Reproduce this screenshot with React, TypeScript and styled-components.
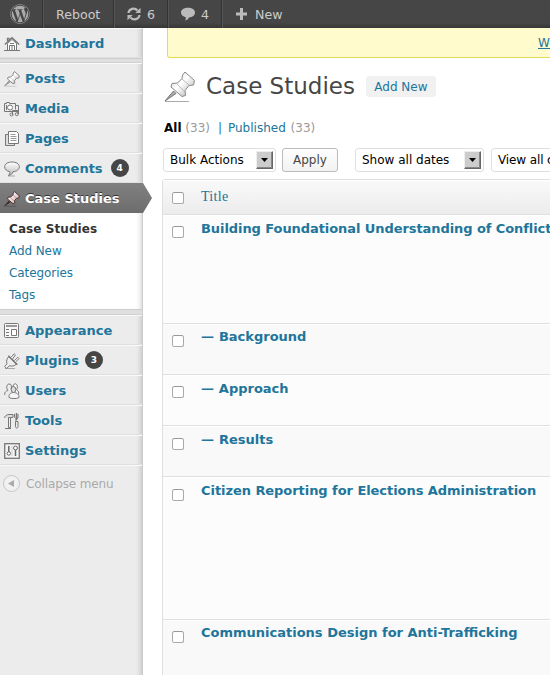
import React from "react";
import styled, { createGlobalStyle, css } from "styled-components";
import { FaWordpress } from "react-icons/fa";

const Global = createGlobalStyle`
  *, *::before, *::after { box-sizing: border-box; }
  html, body { margin: 0; overflow: hidden; background: #fff; }
  body { font: 12px/16px "DejaVu Sans", Verdana, sans-serif; color: #333; }
`;

const Page = styled.div`
  width: 550px;
  height: 675px;
  overflow: hidden;
  display: flex;
  flex-direction: column;
`;

const AdminBar = styled.header`
  flex: none;
  height: 28px;
  display: flex;
  background: linear-gradient(to top, #373737 0, #464646 5px);
  color: #ccc;
`;

const BarItem = styled.div<{ $w: number; $pad: number; $last?: boolean; $gap?: number }>`
  width: ${(p) => p.$w}px;
  padding-left: ${(p) => p.$pad}px;
  display: flex;
  align-items: center;
  gap: ${(p) => p.$gap ?? 0}px;
  white-space: nowrap;
  font-size: 12.6px;
  line-height: 29px;
  ${(p) =>
    !p.$last &&
    css`
      border-right: 1px solid #333;
      box-shadow: 1px 0 0 #555;
    `}
  svg { flex: none; display: block; }
`;

const Body = styled.div`
  flex: 1;
  min-height: 0;
  display: flex;
`;

const Sidebar = styled.nav`
  flex: none;
  width: 143px;
  height: 647px;
  background: #ececec;
  border-right: 1px solid #ccc;
  box-shadow: inset -6px 0 6px -6px rgba(0, 0, 0, 0.25);
`;

const MenuItem = styled.a<{ $current?: boolean }>`
  position: relative;
  display: flex;
  align-items: center;
  height: 30px;
  padding: 2px 0 0 4px;
  color: #21759b;
  font-size: 13px;
  font-weight: bold;
  white-space: nowrap;
  border-top: 1px solid #f9f9f9;
  border-bottom: 1px solid #dfdfdf;
  svg { flex: none; width: 16px; height: 16px; margin-right: 5px; }
  ${(p) =>
    p.$current &&
    css`
      width: 143px;
      color: #fff;
      text-shadow: 0 -1px 0 #333;
      background: linear-gradient(to bottom, #808080, #6d6d6d);
      border-color: #808080 transparent #6d6d6d;
      &::after {
        content: "";
        position: absolute;
        left: 143px;
        top: -1px;
        width: 9px;
        height: 30px;
        background: linear-gradient(to bottom, #808080, #6d6d6d);
        clip-path: polygon(0 0, 100% 50%, 0 100%);
      }
    `}
`;

const Separator = styled.div<{ $h?: number }>`
  height: ${(p) => p.$h ?? 5}px;
  background: #dfdfdf;
  border-top: 1px solid #ccc;
  border-bottom: 1px solid #d0d0d0;
`;

const Count = styled.span<{ $ml: number }>`
  display: flex;
  align-items: center;
  justify-content: center;
  width: 18px;
  height: 18px;
  margin: -2px 0 0 ${(p) => p.$ml}px;
  border-radius: 9px;
  background: #464646;
  color: #fff;
  font-size: 9px;
  line-height: 18px;
`;

const Submenu = styled.div`
  height: 96px;
  padding: 5px 0 0 9px;
  background: #fff;
  box-shadow: inset -6px 0 6px -6px rgba(0, 0, 0, 0.25);
`;

const SubItem = styled.a<{ $current?: boolean }>`
  display: block;
  height: 22px;
  line-height: 22px;
  color: ${(p) => (p.$current ? "#333" : "#21759b")};
  font-weight: ${(p) => (p.$current ? "bold" : "normal")};
  letter-spacing: ${(p) => (p.$current ? "0.08px" : "-0.08px")};
`;

const Collapse = styled.div`
  display: flex;
  align-items: center;
  height: 36px;
  padding-left: 3px;
  border-top: 1px solid #f9f9f9;
  color: #aaa;
  letter-spacing: -0.12px;
  svg { margin-right: 6px; }
`;

const Content = styled.main`
  flex: none;
  width: 407px;
  padding-left: 19px;
  overflow: hidden;
`;

const Notice = styled.div`
  width: 700px;
  height: 30px;
  margin-left: 5px;
  padding-left: 370px;
  line-height: 30px;
  background: #fffbcc;
  border: 1px solid #e6db55;
  border-top: 0;
  border-radius: 0 0 3px 3px;
  color: #21759b;
  text-decoration: underline;
`;

const Heading = styled.div`
  display: flex;
  align-items: center;
  height: 57px;
  padding-left: 2px;
`;

const Title = styled.h1`
  margin: 0 11px 0 10px;
  color: #464646;
  font-size: 23px;
  font-weight: normal;
  line-height: 29px;
  white-space: nowrap;
`;

const AddNew = styled.a`
  width: 70px;
  height: 21px;
  border-radius: 3px;
  background: #f1f1f1;
  color: #21759b;
  line-height: 22px;
  text-align: center;
`;

const Filters = styled.div`
  display: flex;
  height: 26px;
  align-items: center;
  padding-left: 2px;
  color: #999;
  white-space: pre;
  b { color: #000; }
  a { color: #21759b; margin-right: 1px; }
`;

const Divider = styled.span`
  margin: 0 6px 0 8px;
  width: 4px;
  color: #21759b;
`;

const Toolbar = styled.div`
  display: flex;
  width: 600px;
  height: 24px;
  margin: 7px 0 7px 1px;
`;

const Select = styled.div<{ $w: number; $mr: number; $track?: number }>`
  flex: none;
  display: flex;
  justify-content: space-between;
  width: ${(p) => p.$w}px;
  height: 24px;
  margin-right: ${(p) => p.$mr}px;
  padding: 2px 2px 2px 6px;
  border: 1px solid #dfdfdf;
  border-radius: 3px;
  color: #000;
  line-height: 18px;
  letter-spacing: ${(p) => p.$track ?? 0}px;
  white-space: nowrap;
`;

const Arrow = styled.span`
  display: flex;
  align-items: center;
  justify-content: center;
  width: 17px;
  height: 18px;
  background: #ccc;
  border: 1px solid;
  border-color: #eee #666 #666 #eee;
  box-shadow: inset -1px -1px 0 #888;
`;

const Button = styled.button`
  flex: none;
  width: 56px;
  height: 24px;
  margin-right: 17px;
  padding: 0;
  border: 1px solid #bbb;
  border-radius: 3px;
  background: linear-gradient(to bottom, #fefefe, #f2f2f2);
  color: #464646;
  font: inherit;
`;

const Table = styled.section`
  width: 700px;
  border: 1px solid #dfdfdf;
  border-radius: 3px 3px 0 0;
  overflow: hidden;
`;

const Row = styled.div<{ $h: number; $alt?: boolean; $check?: number }>`
  display: flex;
  align-items: flex-start;
  height: ${(p) => p.$h}px;
  padding-left: 9px;
  background: ${(p) => (p.$alt ? "#f9f9f9" : "#fcfcfc")};
  border-top: 1px solid #fff;
  border-bottom: 1px solid #dfdfdf;
  & > i { margin-top: ${(p) => p.$check ?? 10}px; }
`;

const HeadRow = styled(Row)`
  background: linear-gradient(to bottom, #f9f9f9, #ececec);
  color: #21759b;
  font: 14px/18px "Liberation Serif", "Times New Roman", serif;
  letter-spacing: 0.3px;
`;

const Checkbox = styled.i`
  flex: none;
  width: 12px;
  height: 12px;
  margin-right: 17px;
  border: 1px solid #aaa;
  border-top-color: #999;
  border-radius: 2.5px;
  background: #fff;
`;

const HeadTitle = styled.span`
  margin-top: 7px;
`;

const RowTitle = styled.a<{ $top?: number; $track?: number; $gap?: number }>`
  margin-top: ${(p) => p.$top ?? 4}px;
  color: #21759b;
  font-size: 13px;
  font-weight: bold;
  line-height: 18px;
  letter-spacing: ${(p) => p.$track ?? 0}px;
  word-spacing: ${(p) => p.$gap ?? 0}px;
  white-space: nowrap;
`;

const Svg = ({ children }: { children: React.ReactNode }) => (
  <svg viewBox="0 0 16 16" fill="none" stroke="#777" strokeWidth="1">{children}</svg>
);

const Pin = ({ size = 16, active = false }: { size?: number; active?: boolean }) => (
  <svg width={size} height={size} viewBox="0 0 32 32" fill="none">
    <defs>
      <linearGradient id={active ? "pa" : "pn"} x1="0" y1="0" x2="1" y2="1">
        <stop offset="0" stopColor={active ? "#fff" : "#ccc"} />
        <stop offset=".45" stopColor={active ? "#f2dada" : "#fff"} />
        <stop offset="1" stopColor={active ? "#c9aaaa" : "#aaa"} />
      </linearGradient>
    </defs>
    <path d="M1 30.500H25" stroke={active ? "#4c3c3c" : "#aaa"} strokeWidth="1" />
    <path d="M1 30 9.500 20l2.500 2.500Z" fill={active ? "#392525" : "#aaa"} stroke={active ? "#392525" : "#777"} />
    <path
      d="M18.500 4 21 1l9.500 8.500-1 4.500-4.500.5-4 5 .5 5-3.500 1L7 16l1-3.500 5.500-.5 4.500-4.500Z"
      fill={`url(#${active ? "pa" : "pn"})`}
      stroke={active ? "#4b3838" : "#888"}
      strokeWidth={size > 20 ? 1 : 2}
      strokeLinejoin="round"
    />
    <path d="m18 8 7 6M13 13l7 7" stroke={active ? "#947777" : "#bbb"} />
  </svg>
);

const Home = () => (
  <Svg>
    <path d="M3.500 7.500v7h9v-7L8 3.500Z" fill="#fff" />
    <path d="M.8 8.500 8 1.700l7.200 6.800M3.500 5V2.500h1.500v1" strokeWidth="1.300" />
    <path d="M5.500 14V9.500h5V14M8 10v4M0 14.500h16M6 7.500h4" />
  </Svg>
);
const Media = () => (
  <Svg>
    <path d="M10.500 10.500H.5v-8h2v-1h3v1h6v6" fill="#eee" />
    <circle cx="6" cy="6.500" r="2.500" fill="#fff" />
    <path d="M2.500 4v5M12 4.500h2.500V13M8.500 14V9.500h5.500V13M8.500 10.500H14" />
    <circle cx="7.500" cy="13.500" r="1.500" />
    <circle cx="12.800" cy="13.200" r="1.500" />
  </Svg>
);
const Pages = () => (
  <Svg>
    <path d="M4 3.500H1.500v11h9V13" fill="#ddd" />
    <path d="M4.500.5h8l2 2v10h-10Z" fill="#fff" />
    <path d="M6.500 3.500h5M6.500 5.500h6M6.500 7.500h6M6.500 9.500h6" stroke="#999" />
  </Svg>
);
const Comments = () => (
  <svg viewBox="0 0 16 16">
    <defs>
      <linearGradient id="bubble" x2="0" y2="1"><stop stopColor="#fff" /><stop offset="1" stopColor="#bbb" /></linearGradient>
    </defs>
    <path d="M4 15h7" stroke="#aaa" />
    <path d="M8 1c4 0 7.300 1.700 7.300 4.700S12.500 10.500 9 10.700c-.5 2-2 3.300-4.500 3.800 1-1.200 1.500-2.300 1.200-3.900C3 10.200 .7 8.500 .7 5.700 .7 2.700 4 1 8 1Z" fill="url(#bubble)" stroke="#777" />
  </svg>
);
const Appearance = () => (
  <Svg>
    <rect x=".5" y=".5" width="14" height="14" rx="1" fill="#f8f8f8" />
    <path d="M2 3h11" stroke="#999" strokeWidth="2" />
    <path d="M2 6.500h3M2 9.500h3M2 12.500h3" />
    <path d="M7.500 6.500h5v6h-5Z" fill="#fff" />
  </Svg>
);
const Plugins = () => (
  <Svg>
    <path d="M1 15.500h10" stroke="#aaa" />
    <path d="M.6 13.500 3 10.800C2 8 2.800 5.500 5 3.500l7.500 7.500c-2 2-4.500 2.500-7 1.800L2.500 15.500Z" fill="#eee" />
    <path d="m4.300 2.800 9 9" strokeWidth="1.600" />
    <path d="M7 4.500 10.200.8l1.200 1.100L8.500 6M10.300 7.800l3.600-3.500 1.200 1.200-3.600 3.500" fill="#fff" />
  </Svg>
);
const Users = () => (
  <Svg>
    <path d="M1 12C0 9.500 2 8 4 7.500 2 6 2.500 1 5 1s3 2.500 2 5" fill="#eee" />
    <path d="M9.500 5.500C8.500 3 9.500.5 11.500.8s2.500 4.200 1 6c2 1 2.500 3 2 4.500" fill="#fff" />
    <ellipse cx="9.500" cy="6.500" rx="2.300" ry="3" fill="#ddd" />
    <path d="M5 14.500c-.5-3 1.500-5 4.500-5s6 2 5.500 5c-2.500 1.500-7.500 1.500-10 0Z" fill="#f5f5f5" />
  </Svg>
);
const Tools = () => (
  <Svg>
    <path d="M.5 5C1 2.500 3 1.500 5 1.500h4v3H6.500" fill="#ddd" />
    <path d="M4.500 4.500h2v10h-2Z" fill="#eee" />
    <path d="M10.500 1v3l1.500 1.500v3M14 1v4l-1.500 1M11.500 8.500h2.500v5c0 2-2.500 2-2.500 0ZM1 15.500h6" />
    <path d="M12.500 0v7" strokeWidth="1.500" />
  </Svg>
);
const Settings = () => (
  <Svg>
    <rect x=".7" y=".7" width="14.600" height="14.600" fill="#f4f4f4" strokeWidth="1.300" />
    <path d="M4.800 3v6M11.500 7v6" stroke="#666" strokeWidth="1.500" />
    <circle cx="4.800" cy="10.500" r="1.700" fill="#fff" stroke="#666" />
    <circle cx="11.500" cy="5" r="1.900" fill="#fff" stroke="#666" />
    <path d="M8 3v10" stroke="#ccc" />
  </Svg>
);

type Entry = { label: string; icon: React.ReactNode; count?: number; gap?: number };
const upper: Entry[] = [
  { label: "Posts", icon: <Pin /> },
  { label: "Media", icon: <Media /> },
  { label: "Pages", icon: <Pages /> },
  { label: "Comments", icon: <Comments />, count: 4, gap: 8 },
];
const lower: Entry[] = [
  { label: "Appearance", icon: <Appearance /> },
  { label: "Plugins", icon: <Plugins />, count: 3, gap: 6 },
  { label: "Users", icon: <Users /> },
  { label: "Tools", icon: <Tools /> },
  { label: "Settings", icon: <Settings /> },
];
const Item = ({ label, icon, count, gap = 7 }: Entry) => (
  <MenuItem>{icon}{label}{count && <Count $ml={gap}>{count}</Count>}</MenuItem>
);

const rows = [
  { title: "Building Foundational Understanding of Conflict", h: 109, check: 10, top: 4, track: -0.075 },
  { title: "— Background", h: 51, check: 10, top: 3, alt: true, gap: 0.4 },
  { title: "— Approach", h: 51, check: 10, top: 4, gap: 0.3 },
  { title: "— Results", h: 51, check: 11, top: 4, alt: true, gap: 0.4 },
  { title: "Citizen Reporting for Elections Administration", h: 143, check: 11, top: 4, track: -0.055 },
  { title: "Communications Design for Anti-Trafficking", h: 100, check: 10, top: 3, alt: true },
];

const DropArrow = () => (
  <Arrow><svg width="7" height="4"><path d="M0 0h7L3.500 4Z" fill="#000" /></svg></Arrow>
);

export default function App() {
  return (
    <Page>
      <Global />
      <AdminBar>
        <BarItem $w={43} $pad={10}><FaWordpress size={20} color="#aaa" /></BarItem>
        <BarItem $w={71} $pad={13}>Reboot</BarItem>
        <BarItem $w={54} $pad={13} $gap={6}>
          <svg width="14" height="14" viewBox="0 0 14 14" fill="none" stroke="#bbb" strokeWidth="2.200">
            <path d="M1.500 6C2 1.500 7.500.2 10.500 3.500M12.500 8C12 12.500 6.500 13.800 3.500 10.500" />
            <path d="M13.500.8V6H8.300ZM.5 13.200V8h5.200Z" fill="#bbb" stroke="none" />
          </svg>6
        </BarItem>
        <BarItem $w={54} $pad={13} $gap={6}>
          <svg width="14" height="14" viewBox="0 0 14 14"><path d="M7 .7c4 0 7 1.800 7 4.800s-2.500 4.800-6 5c-.7 1.500-2 2.600-4 3 .7-1.100 1-2.200.7-3.300C2 9.700 0 7.800 0 5.500 0 2.500 3 .7 7 .7Z" fill="#bbb" /></svg>4
        </BarItem>
        <BarItem $w={120} $pad={14} $gap={8} $last>
          <svg width="11" height="12" viewBox="0 0 11 12"><path d="M4 0h3v4.500h4v3H7V12H4V7.500H0v-3h4Z" fill="#bbb" /></svg>New
        </BarItem>
      </AdminBar>
      <Body>
        <Sidebar>
          <Item label="Dashboard" icon={<Home />} />
          <Separator />
          {upper.map((e) => <Item key={e.label} {...e} />)}
          <MenuItem $current><Pin active />Case Studies</MenuItem>
          <Submenu>
            <SubItem $current>Case Studies</SubItem>
            <SubItem>Add New</SubItem>
            <SubItem>Categories</SubItem>
            <SubItem>Tags</SubItem>
          </Submenu>
          <Separator $h={6} />
          {lower.map((e) => <Item key={e.label} {...e} />)}
          <Collapse>
            <svg width="17" height="17" viewBox="0 0 17 17">
              <circle cx="8.500" cy="8.500" r="8" fill="#f1f1f1" stroke="#c4c4c4" />
              <path d="M5 8.500 11 5v7Z" fill="#aaa" />
            </svg>
            Collapse menu
          </Collapse>
        </Sidebar>
        <Content>
          <Notice>Welcome</Notice>
          <Heading>
            <Pin size={32} />
            <Title>Case Studies</Title>
            <AddNew>Add New</AddNew>
          </Heading>
          <Filters><b>All</b> (33)<Divider>|</Divider><a>Published</a> (33)</Filters>
          <Toolbar>
            <Select $w={113} $mr={6}>Bulk Actions<DropArrow /></Select>
            <Button>Apply</Button>
            <Select $w={129} $mr={7}>Show all dates<DropArrow /></Select>
            <Select $w={160} $mr={0} $track={-0.12}>View all categories<DropArrow /></Select>
          </Toolbar>
          <Table>
            <HeadRow $h={35} $check={11}><Checkbox /><HeadTitle>Title</HeadTitle></HeadRow>
            {rows.map((r) => (
              <Row key={r.title} $h={r.h} $alt={r.alt} $check={r.check}>
                <Checkbox /><RowTitle $top={r.top} $track={r.track} $gap={r.gap}>{r.title}</RowTitle>
              </Row>
            ))}
          </Table>
        </Content>
      </Body>
    </Page>
  );
}
